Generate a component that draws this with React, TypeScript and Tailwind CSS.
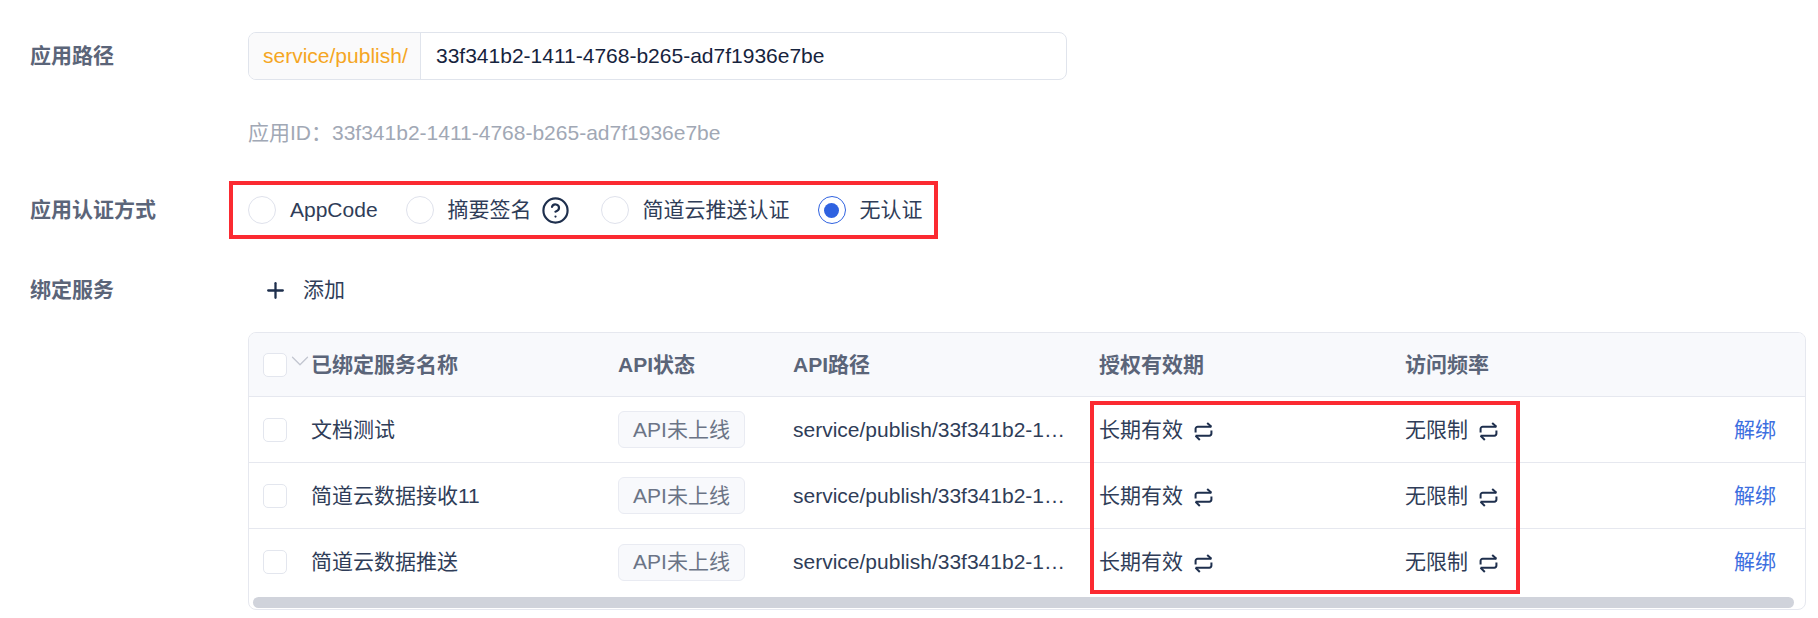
import { CircleHelp, Plus, ChevronDown } from 'lucide-react';

const rows = ['文档测试', '简道云数据接收11', '简道云数据推送'];
const font = { fontFamily: '"Liberation Sans", "Noto Sans CJK SC", sans-serif' };

function SwapIcon() {
  return (
    <svg width="19" height="19" viewBox="0 0 18 18" fill="none" stroke="#1e2f4d" strokeWidth="1.9" className="ml-[11px] mt-[3px] shrink-0">
      <path d="M1.500 10V6.500a2 2 0 0 1 2-2H16.500" />
      <path d="M12.500 1L16.500 4.500" />
      <path d="M16.500 8v3a2 2 0 0 1-2 2H1.500" />
      <path d="M5.500 17L1.500 13" />
    </svg>
  );
}

function Radio({ label, checked, children }: { label: string; checked?: boolean; children?: React.ReactNode }) {
  return (
    <div className="flex items-center">
      <span className={`w-[28px] h-[28px] rounded-full border flex items-center justify-center ${checked ? 'border-[#2f62e0]' : 'border-[#dfe2ec]'}`}>
        {checked && <span className="w-[15px] h-[15px] rounded-full bg-[#2f62e0]" />}
      </span>
      <span className="ml-[14px] text-[21px] text-[#2f3d58]">{label}</span>
      {children}
    </div>
  );
}

function Checkbox() {
  return <span className="w-[24px] h-[24px] rounded-[5px] border border-[#e3e6ee] bg-white shrink-0" />;
}

export default function App() {
  return (
    <div style={font} className="relative w-[1818px] h-[618px] bg-white overflow-hidden pt-[32px] pl-[30px]">
      <div className="flex">
        <div className="w-[218px] h-[48px] flex items-center text-[21px] font-bold text-[#5b6579]">应用路径</div>
        <div className="w-[819px] h-[48px] flex items-center rounded-[8px] border border-[#e0e4ec] overflow-hidden">
          <div className="w-[172px] h-full flex items-center pl-[14px] bg-[#fafafb] border-r border-[#e0e4ec] text-[21px] text-[#f5a623]">service/publish/</div>
          <div className="pl-[15px] text-[21px] text-[#16233d]">33f341b2-1411-4768-b265-ad7f1936e7be</div>
        </div>
      </div>

      <div className="ml-[218px] mt-[38px] h-[30px] flex items-center text-[21px] text-[#a1a8b5]">应用ID：33f341b2-1411-4768-b265-ad7f1936e7be</div>

      <div className="flex mt-[33px] items-center">
        <div className="w-[199px] text-[21px] font-bold text-[#5b6579]">应用认证方式</div>
        <div className="w-[709px] h-[58px] border-4 border-[#fb2a31] flex items-center pl-[15px] gap-[28px]">
          <Radio label="AppCode" />
          <Radio label="摘要签名">
            <CircleHelp size={29} strokeWidth={1.8} color="#1e2f4d" className="ml-[9px] mr-[3px]" />
          </Radio>
          <Radio label="简道云推送认证" />
          <Radio label="无认证" checked />
        </div>
      </div>

      <div className="flex mt-[31px] items-center h-[40px]">
        <div className="w-[233px] text-[21px] font-bold text-[#5b6579]">绑定服务</div>
        <Plus size={25} strokeWidth={2.2} color="#1e2f4d" />
        <span className="ml-[15px] text-[21px] text-[#2f3d58]">添加</span>
      </div>

      <div className="ml-[218px] mt-[22px] w-[1558px] h-[278px] rounded-[8px] border border-[#e6e8ef] overflow-hidden">
        <div className="flex items-center h-[64px] bg-[#f8f9fc] border-b border-[#e6e8ef] text-[21px] font-bold text-[#5b6579]">
          <div className="w-[62px] pl-[14px] flex items-center relative">
            <Checkbox />
            <ChevronDown size={30} strokeWidth={1} color="#c2c6d0" className="absolute left-[36px] top-[-7px]" />
          </div>
          <div className="w-[307px]">已绑定服务名称</div>
          <div className="w-[175px]">API状态</div>
          <div className="w-[306px]">API路径</div>
          <div className="w-[306px]">授权有效期</div>
          <div>访问频率</div>
        </div>
        {rows.map((name, i) => (
          <div key={name} className={`flex items-center h-[66px] text-[21px] text-[#2f3d58] ${i < 2 ? 'border-b border-[#e6e8ef]' : ''}`}>
            <div className="w-[62px] pl-[14px] flex items-center">
              <Checkbox />
            </div>
            <div className="w-[307px]">{name}</div>
            <div className="w-[175px]">
              <span className="inline-flex items-center justify-center w-[127px] h-[37px] rounded-[6px] border border-[#e9ebf2] bg-[#f8f9fc] text-[#6b7486]">API未上线</span>
            </div>
            <div className="w-[306px] pr-[26px] truncate">service/publish/33f341b2-1411-4768-b265-ad7f1936e7be</div>
            <div className="w-[306px] flex items-center">长期有效<SwapIcon /></div>
            <div className="w-[329px] flex items-center">无限制<SwapIcon /></div>
            <div className="text-[#3d6fe0]">解绑</div>
          </div>
        ))}
        <div className="h-[11px] ml-[4px] mr-[11px] mt-[2px] rounded-full bg-[#d0d3db]" />
      </div>

      <div className="absolute left-[1090px] top-[401px] w-[430px] h-[193px] border-4 border-[#fb2a31] pointer-events-none" />
    </div>
  );
}
